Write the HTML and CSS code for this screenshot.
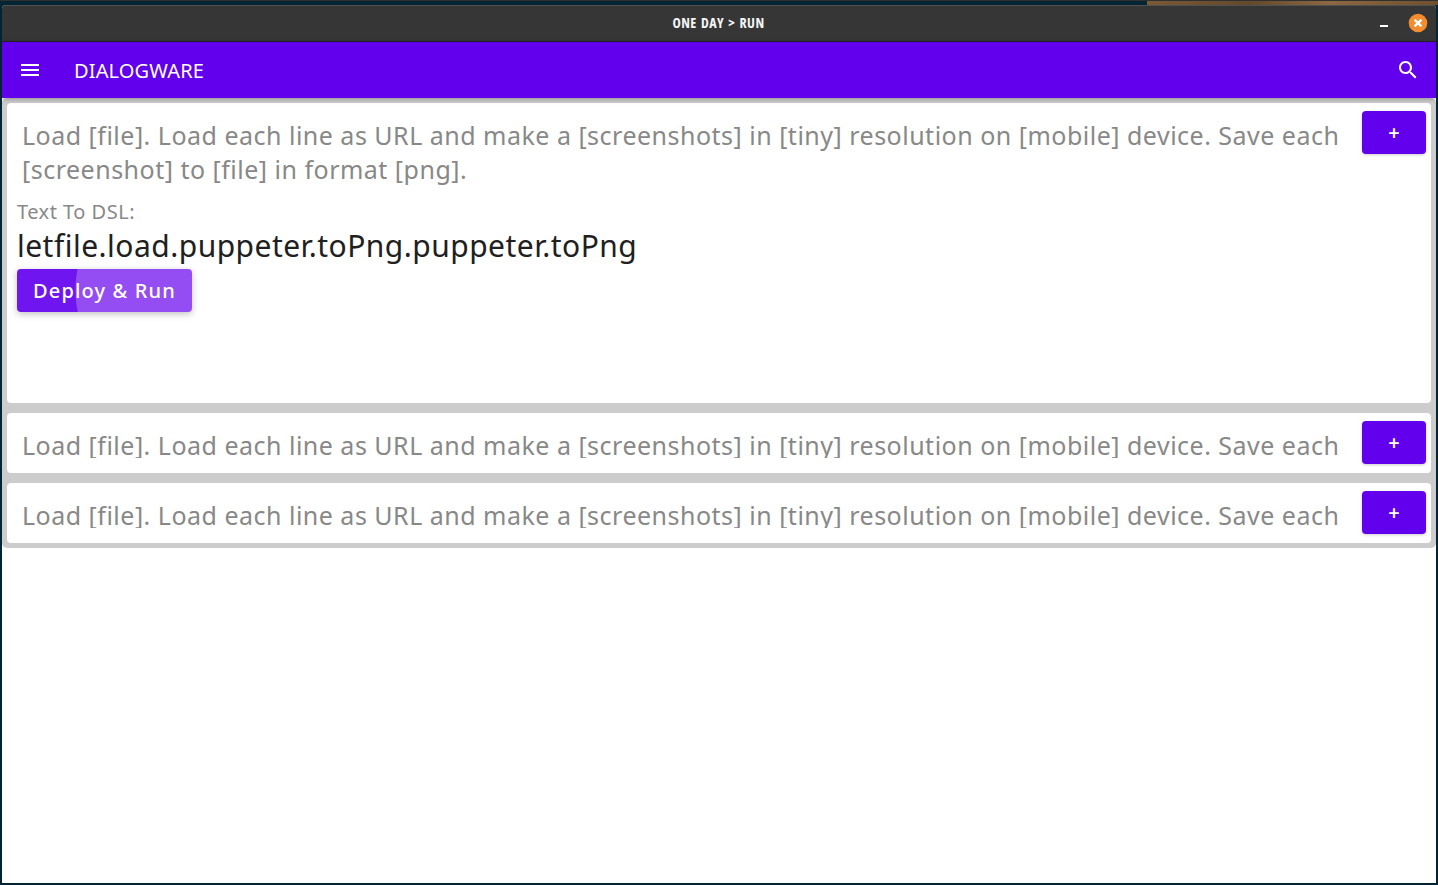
FILE: index.html
```html
<!DOCTYPE html>
<html lang="en">
<head>
<meta charset="utf-8">
<title>ONE DAY &gt; RUN</title>
<link rel="stylesheet" href="styles.css">
</head>
<body>
<div class="wallpaper"></div>
<div class="window">
  <header class="titlebar">
    <span class="title">ONE DAY &gt; RUN</span>
    <div class="controls">
      <svg class="minimize" width="8" height="2" viewBox="0 0 8 2"><path d="M0 0h8v2H0z" fill="#fff"/></svg>
      <svg width="20" height="20" viewBox="0 0 20 20"><circle cx="10" cy="10" r="9.3" fill="#f48b2c"/><path d="M6.6 6.6l6.8 6.8M13.4 6.6l-6.8 6.8" stroke="#fff" stroke-width="2.3"/></svg>
    </div>
  </header>
  <div class="appbar">
    <svg width="24" height="24" viewBox="0 0 24 24" fill="#fff"><path d="M3 18h18v-2H3v2zm0-5h18v-2H3v2zm0-7v2h18V6H3z"/></svg>
    <span class="brand">DIALOGWARE</span>
    <svg width="24" height="24" viewBox="0 0 24 24" fill="#fff"><path d="M15.5 14h-.79l-.28-.27C15.41 12.59 16 11.11 16 9.5 16 5.91 13.09 3 9.5 3S3 5.91 3 9.5 5.91 16 9.5 16c1.61 0 3.09-.59 4.23-1.57l.27.28v.79l5 4.99L20.49 19l-4.99-5zm-6 0C7.01 14 5 11.99 5 9.5S7.01 5 9.5 5 14 7.01 14 9.5 11.99 14 9.5 14z"/></svg>
  </div>
  <main class="list">
    <section class="card card-open">
      <div class="row">
        <p class="prompt">Load [file]. Load each line as URL and make a [screenshots] in [tiny] resolution on [mobile] device. Save each<br>[screenshot] to [file] in format [png].</p>
        <button class="btn add">+</button>
      </div>
      <div class="result">
        <div class="label">Text To DSL:</div>
        <div class="dsl">letfile.load.puppeter.toPng.puppeter.toPng</div>
        <button class="btn deploy">Deploy &amp; Run</button>
      </div>
    </section>
    <section class="card">
      <div class="row">
        <p class="prompt clipped">Load [file]. Load each line as URL and make a [screenshots] in [tiny] resolution on [mobile] device. Save each</p>
        <button class="btn add">+</button>
      </div>
    </section>
    <section class="card">
      <div class="row">
        <p class="prompt clipped">Load [file]. Load each line as URL and make a [screenshots] in [tiny] resolution on [mobile] device. Save each</p>
        <button class="btn add">+</button>
      </div>
    </section>
  </main>
</div>
</body>
</html>
```
FILE: styles.css
```css
* { box-sizing: border-box; }
body {
  margin: 0;
  height: 885px;
  padding: 0 2px 2px;
  overflow: hidden;
  display: flex;
  flex-direction: column;
  background: #022433;
  font-family: "Noto Sans", sans-serif;
}
.wallpaper {
  flex: none;
  height: 5px;
  margin: 0 -2px;
  border-top: 1px solid #303030;
  background: linear-gradient(90deg, #022433 1147px, #7a5936 1147px, #63482d 1250px, #8b6841 1330px, #70502f);
}
.window {
  flex: 1;
  display: flex;
  flex-direction: column;
  background: #fff;
  border-radius: 4px 4px 0 0;
  overflow: hidden;
}
.titlebar {
  flex: none;
  display: grid;
  grid-template-columns: 1fr auto 1fr;
  align-items: center;
  height: 37px;
  padding: 0 8px 1px 0;
  background: #363636;
  border-top: 1px solid #505050;
  border-bottom: 1px solid #242424;
}
.title {
  grid-column: 2;
  padding-left: 7px;
  color: #f4f4f4;
  font: 700 14px/18px "Open Sans", sans-serif;
  font-stretch: 82%;
  letter-spacing: .45px;
  word-spacing: 1.2px;
}
.controls {
  display: flex;
  justify-content: flex-end;
  align-items: center;
  gap: 20px;
}
.minimize { margin-top: 6px; }
.appbar {
  flex: none;
  display: flex;
  align-items: center;
  height: 56px;
  padding: 0 16px;
  background: #6200ee;
  box-shadow: 0 1px 5px rgba(0, 0, 0, .3);
  position: relative;
}
.brand {
  flex: 1;
  margin-left: 32px;
  padding-top: 2px;
  color: #fff;
  font-size: 20px;
  line-height: 28px;
  letter-spacing: .15px;
}
.list {
  display: flex;
  flex-direction: column;
  gap: 10px;
  padding: 5px;
  background: #ccc;
  border-radius: 5px;
}
.card {
  height: 60px;
  padding: 8px 5px 0 10px;
  background: #fff;
  border-radius: 4px;
}
.card-open { height: 300px; }
.row { display: flex; justify-content: space-between; }
.prompt {
  margin: 7px 0 0 5px;
  color: #888;
  font-size: 25px;
  line-height: 34px;
  letter-spacing: .494px;
  white-space: nowrap;
}
.clipped { height: 30px; overflow: hidden; }
.btn {
  flex: none;
  height: 43px;
  padding: 0 0 0 1px;
  border: 0;
  border-radius: 4px;
  background: #6200ee;
  box-shadow: 0 1px 3px rgba(0, 0, 0, .2);
  color: #fff;
  font: 500 20px/43px "Noto Sans", sans-serif;
  letter-spacing: 1.25px;
  white-space: nowrap;
}
.add { width: 64px; font-weight: 600; }
.label {
  margin-top: 12px;
  color: #888;
  font-size: 20px;
  line-height: 27px;
  letter-spacing: .5px;
}
.dsl {
  height: 44px;
  color: #202020;
  font-size: 30px;
  line-height: 42px;
  letter-spacing: .48px;
}
.deploy {
  width: 175px;
  display: block;
  padding: 0 0 0 16px;
  text-align: left;
  letter-spacing: 1.15px;
  background: radial-gradient(circle at 165px 21px, #934df3 106px, #6f15ef 107px);
  box-shadow: 0 2px 7px rgba(0, 0, 0, .25);
}
```
